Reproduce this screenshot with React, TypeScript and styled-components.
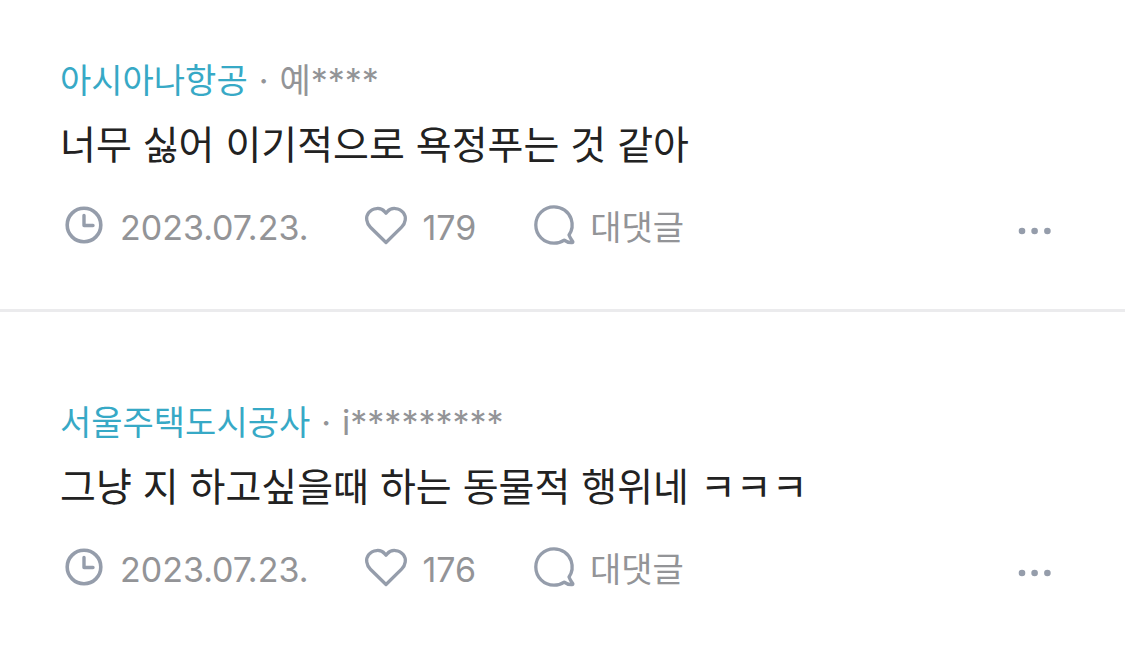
import React from "react";
import styled, { createGlobalStyle } from "styled-components";

const GlobalStyle = createGlobalStyle`
  * { box-sizing: border-box; }
  body { margin: 0; background: #fff; font-family: Inter, "Noto Sans CJK KR", sans-serif; }
  button { font: inherit; color: inherit; background: none; border: 0; padding: 0; cursor: pointer; }
`;
const Comment = styled.article`
  padding: 57px 60px;
  & + & { border-top: 3px solid #ebebed; padding-top: 87px; }
`;
const Author = styled.header`
  display: flex;
  align-items: center;
  gap: 11px;
  height: 48px;
  font-size: 34px;
  line-height: 48px;
  color: #939497;
`;
const Company = styled.a`
  color: #37a9c6;
  text-decoration: none;
`;
const Body = styled.p`
  margin: 8px 0 0;
  font-size: 39px;
  line-height: 64px;
  color: #222;
`;
const Actions = styled.footer`
  display: flex;
  align-items: center;
  height: 48px;
  margin-top: 27px;
  font-size: 34px;
  line-height: 48px;
  color: #939497;
`;
const Stamp = styled.time`
  display: flex;
  align-items: center;
  gap: 12px;
  margin-right: 54px;
`;
const Action = styled.button`
  display: flex;
  align-items: center;
  gap: 12px;
  margin-right: 54px;
`;
const More = styled.button`
  display: flex;
  margin-left: auto;
`;
const Icon = styled.svg`
  width: 48px;
  height: 48px;
  fill: none;
  stroke: #959dab;
  stroke-width: 3.3;
  stroke-linecap: round;
  stroke-linejoin: round;
`;

function Item({ company, user, text, likes }: { company: string; user: string; text: string; likes: number }) {
  return (
    <Comment>
      <Author><Company href="#">{company}</Company><span>·</span><span>{user}</span></Author>
      <Body>{text}</Body>
      <Actions>
        <Stamp dateTime="2023-07-23">
          <Icon viewBox="0 -1 48 48" aria-hidden="true">
            <circle cx="24" cy="20" r="16.8" strokeWidth="3.6" />
            <path d="M24 10.5V20.5H33" strokeWidth="3.4" />
          </Icon>
          2023.07.23.
        </Stamp>
        <Action aria-label={`좋아요 ${likes}`}>
          <Icon viewBox="0 -1 48 48" aria-hidden="true">
            <path d="M24 37.5L8.4 22.2C4.3 18 3.4 12 6.6 7.8C10.4 2.8 18.7 1.8 22.6 6.6L24 8.3L25.4 6.6C29.3 1.8 37.6 2.8 41.4 7.8C44.6 12 43.7 18 39.6 22.2Z" />
          </Icon>
          {likes}
        </Action>
        <Action>
          <Icon viewBox="0 -1 48 48" aria-hidden="true">
            <path d="M39 30C42 25.8 43 19.7 41.2 14.1C38.8 6.6 31.8 1.8 24 1.8C13.8 1.8 5.8 9.8 5.8 20C5.8 30.2 13.8 38.2 24 38.2C27.8 38.2 31.2 37.2 34.2 35.1C36.2 36.7 38.9 37.8 42.1 37.6C42.8 37.6 43.1 37 42.7 36.4C41.2 34.4 39.8 32.4 39 30Z" />
          </Icon>
          대댓글
        </Action>
        <More aria-label="더보기">
          <Icon viewBox="2 -1 48 48" aria-hidden="true">
            <path d="M7 26h.01M19.6 26h.01M32.4 26h.01" strokeWidth="6.6" />
          </Icon>
        </More>
      </Actions>
    </Comment>
  );
}

export default function App() {
  return (
    <>
      <GlobalStyle />
      <main>
        <Item company="아시아나항공" user="예****" text="너무 싫어 이기적으로 욕정푸는 것 같아" likes={179} />
        <Item company="서울주택도시공사" user="i*********" text="그냥 지 하고싶을때 하는 동물적 행위네 ㅋㅋㅋ" likes={176} />
      </main>
    </>
  );
}
